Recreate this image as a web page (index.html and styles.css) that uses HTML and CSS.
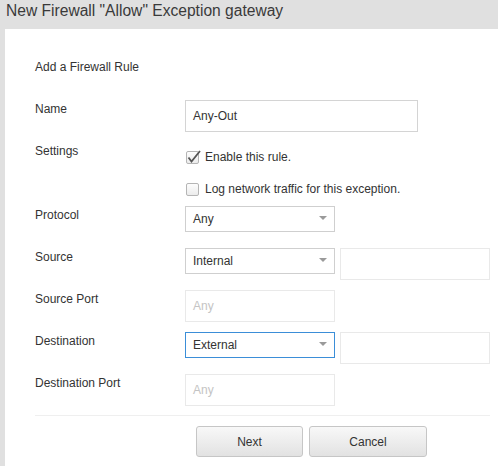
FILE: index.html
```html
<!DOCTYPE html>
<html>
<head>
<meta charset="utf-8">
<link rel="stylesheet" href="styles.css">
</head>
<body>
<div class="header">New Firewall "Allow" Exception gateway</div>
<div class="panel">
  <div class="section-title">Add a Firewall Rule</div>
  <div class="form">
    <div class="row">
      <div class="label">Name</div>
      <div class="input name-input">Any-Out</div>
    </div>
    <div class="row row-settings">
      <div class="label">Settings</div>
      <div class="checks">
        <div class="check-item">
          <span class="checkbox">
            <svg class="checkmark" width="16" height="16" viewBox="0 0 16 16"><path d="M2.5 8.5 L5.5 12.5 L14 2" fill="none" stroke="#555" stroke-width="1.8"/></svg>
          </span>
          <span>Enable this rule.</span>
        </div>
        <div class="check-item">
          <span class="checkbox"></span>
          <span>Log network traffic for this exception.</span>
        </div>
      </div>
    </div>
    <div class="row">
      <div class="label">Protocol</div>
      <div class="select">Any<span class="arrow"></span></div>
    </div>
    <div class="row">
      <div class="label">Source</div>
      <div class="select">Internal<span class="arrow"></span></div>
      <div class="extra"></div>
    </div>
    <div class="row">
      <div class="label">Source Port</div>
      <div class="input port disabled">Any</div>
    </div>
    <div class="row">
      <div class="label">Destination</div>
      <div class="select focused">External<span class="arrow"></span></div>
      <div class="extra"></div>
    </div>
    <div class="row">
      <div class="label">Destination Port</div>
      <div class="input port disabled">Any</div>
    </div>
  </div>
  <div class="divider"></div>
  <div class="buttons">
    <button class="btn btn-next">Next</button>
    <button class="btn btn-cancel">Cancel</button>
  </div>
</div>
</body>
</html>
```
FILE: styles.css
```css
html, body {
  margin: 0;
  padding: 0;
}
body {
  background: #e0e0e0;
  font-family: "Liberation Sans", Arial, sans-serif;
  color: #333;
  width: 498px;
  height: 466px;
  overflow: hidden;
}
.header {
  height: 29px;
  box-sizing: border-box;
  padding: 1px 0 0 6px;
  font-size: 15.6px;
  line-height: 20px;
  color: #3a3a3a;
}
.panel {
  margin-left: 5px;
  background: #fff;
  height: 437px;
  padding: 30px 0 0 30px;
  box-sizing: border-box;
  font-size: 12px;
}
.section-title {
  line-height: 16px;
  height: 16px;
  margin-bottom: 25px;
}
.form {
  display: flex;
  flex-direction: column;
}
.row {
  display: flex;
  align-items: flex-start;
  margin-bottom: 10px;
  min-height: 32px;
}
.row-settings {
  margin-bottom: 0;
  height: 64px;
}
.label {
  width: 150px;
  flex: none;
  line-height: 16px;
  padding-top: 1px;
}
.input {
  box-sizing: border-box;
  border: 1px solid #d4d4d4;
  height: 32px;
  line-height: 31px;
  padding-left: 7px;
}
.name-input {
  width: 233px;
}
.port {
  width: 150px;
}
.disabled {
  border-color: #e9e9e9;
  color: #c4c4c4;
}
.checks {
  display: flex;
  flex-direction: column;
  gap: 2px;
}
.check-item {
  height: 30px;
  display: flex;
  align-items: center;
  gap: 6px;
  padding-left: 1px;
}
.checkbox {
  position: relative;
  width: 13px;
  height: 13px;
  box-sizing: border-box;
  border: 1px solid #b5b5b5;
  border-radius: 2px;
  background: linear-gradient(#fdfdfd, #ececec);
  flex: none;
}
.checkmark {
  position: absolute;
  left: -1px;
  top: -3px;
}
.select {
  position: relative;
  box-sizing: border-box;
  width: 150px;
  height: 26px;
  line-height: 25px;
  border: 1px solid #cfcfcf;
  padding-left: 7px;
}
.select.focused {
  border-color: #3b8ed8;
}
.arrow {
  position: absolute;
  right: 7px;
  top: 9px;
  width: 0;
  height: 0;
  border-left: 4px solid transparent;
  border-right: 4px solid transparent;
  border-top: 4px solid #9a9a9a;
}
.extra {
  margin-left: 5px;
  width: 150px;
  height: 32px;
  box-sizing: border-box;
  border: 1px solid #e9e9e9;
}
.divider {
  height: 1px;
  background: #efefef;
  width: 455px;
  margin-top: -1px;
}
.buttons {
  display: flex;
  gap: 6px;
  margin: 10px 0 0 161px;
}
.btn {
  height: 31px;
  box-sizing: border-box;
  border: 1px solid #c6c6c6;
  border-radius: 3px;
  background: linear-gradient(#f8f8f8, #e2e2e2);
  font-family: "Liberation Sans", Arial, sans-serif;
  font-size: 12px;
  color: #333;
  padding: 0;
}
.btn-next {
  width: 107px;
}
.btn-cancel {
  width: 118px;
}
```
